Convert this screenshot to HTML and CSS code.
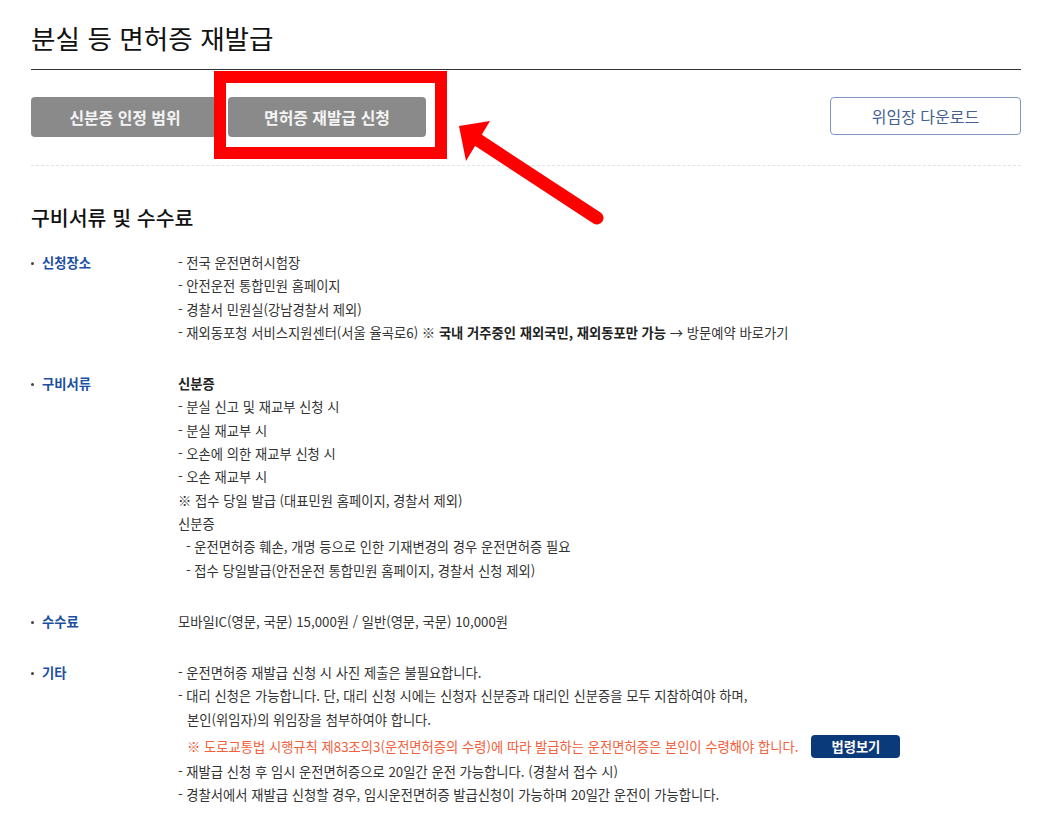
FILE: index.html
```html
<!DOCTYPE html>
<html lang="ko">
<head>
  <meta charset="UTF-8" />
  <title>분실 등 면허증 재발급</title>
  <link rel="stylesheet" href="styles.css">
</head>
<body>
  <div class="page">
    <h1 class="pageTitle">분실 등 면허증 재발급</h1>

    <div class="tabBar">
      <div class="tabs">
        <button class="tab tabFirst">신분증 인정 범위</button>
        <button class="tab tabSecond">면허증 재발급 신청</button>
      </div>
      <button class="downloadBtn">위임장 다운로드</button>
    </div>

    <h2 class="sectionTitle">구비서류 및 수수료</h2>

    <div class="infoList">
      <div class="infoRow">
        <div class="label">신청장소</div>
        <div class="content">
          <p>- 전국 운전면허시험장</p>
          <p>- 안전운전 통합민원 홈페이지</p>
          <p>- 경찰서 민원실(강남경찰서 제외)</p>
          <p>- 재외동포청 서비스지원센터(서울 율곡로6) ※ <b>국내 거주중인 재외국민, 재외동포만 가능</b> → 방문예약 바로가기</p>
        </div>
      </div>

      <div class="infoRow">
        <div class="label">구비서류</div>
        <div class="content">
          <p><b>신분증</b></p>
          <p>- 분실 신고 및 재교부 신청 시</p>
          <p>- 분실 재교부 시</p>
          <p>- 오손에 의한 재교부 신청 시</p>
          <p>- 오손 재교부 시</p>
          <p>※ 접수 당일 발급 (대표민원 홈페이지, 경찰서 제외)</p>
          <p>신분증</p>
          <p class="sub">- 운전면허증 훼손, 개명 등으로 인한 기재변경의 경우 운전면허증 필요</p>
          <p class="sub">- 접수 당일발급(안전운전 통합민원 홈페이지, 경찰서 신청 제외)</p>
        </div>
      </div>

      <div class="infoRow">
        <div class="label">수수료</div>
        <div class="content">
          <p>모바일IC(영문, 국문) 15,000원 / 일반(영문, 국문) 10,000원</p>
        </div>
      </div>

      <div class="infoRow">
        <div class="label">기타</div>
        <div class="content">
          <p>- 운전면허증 재발급 신청 시 사진 제출은 불필요합니다.</p>
          <p>- 대리 신청은 가능합니다. 단, 대리 신청 시에는 신청자 신분증과 대리인 신분증을 모두 지참하여야 하며,</p>
          <p class="cont">본인(위임자)의 위임장을 첨부하여야 합니다.</p>
          <div class="notice">
            <span class="noticeText">※ 도로교통법 시행규칙 제83조의3(운전면허증의 수령)에 따라 발급하는 운전면허증은 본인이 수령해야 합니다.</span>
            <button class="lawBtn">법령보기</button>
          </div>
          <p>- 재발급 신청 후 임시 운전면허증으로 20일간 운전 가능합니다. (경찰서 접수 시)</p>
          <p>- 경찰서에서 재발급 신청할 경우, 임시운전면허증 발급신청이 가능하며 20일간 운전이 가능합니다.</p>
        </div>
      </div>
    </div>
  </div>

  <!-- annotation overlay -->
  <div class="highlightBox"></div>
  <svg class="pointer" width="1048" height="838" viewBox="0 0 1048 838">
    <line x1="597" y1="218" x2="478" y2="140" stroke="#ff0000" stroke-width="13" stroke-linecap="round" />
    <polygon points="459,126 490,121 466,161" fill="#ff0000" />
  </svg>
</body>
</html>
```

FILE: styles.css
```css
* {
  margin: 0;
  padding: 0;
  box-sizing: border-box;
}

body {
  background: #fff;
  font-family: "Noto Sans CJK KR", "Noto Sans", sans-serif;
  color: #333;
  position: relative;
  width: 1048px;
  min-height: 838px;
  overflow: hidden;
}

.page {
  width: 990px;
  margin-left: 31px;
  padding-top: 20px;
}

.pageTitle {
  font-size: 26.6px;
  font-weight: 400;
  line-height: 36px;
  color: #111;
  padding-bottom: 13px;
  border-bottom: 1px solid #333;
}

.tabBar {
  display: flex;
  justify-content: space-between;
  align-items: flex-start;
  margin-top: 27px;
  padding-bottom: 28px;
  border-bottom: 1px dashed #e2e2e2;
}

.tabs {
  display: flex;
  gap: 9px;
}

.tab {
  height: 40px;
  border: none;
  border-radius: 4px;
  background: #8a8a8a;
  color: #f4f4f4;
  font-family: inherit;
  font-size: 15.9px;
  font-weight: 700;
}

.tabFirst {
  width: 188px;
}

.tabSecond {
  width: 198px;
}

.downloadBtn {
  width: 191px;
  height: 38px;
  border: 1px solid #7d97c6;
  border-radius: 4px;
  background: #fff;
  color: #44608f;
  font-family: inherit;
  font-size: 16px;
}

.sectionTitle {
  font-size: 20.5px;
  font-weight: 500;
  line-height: 28px;
  color: #111;
  margin-top: 37px;
}

.infoList {
  margin-top: 20px;
}

.infoRow {
  display: flex;
  margin-bottom: 28px;
  font-size: 13.3px;
  line-height: 23.3px;
}

.label {
  width: 147px;
  flex-shrink: 0;
  position: relative;
  padding-left: 11px;
  color: #1c4f9f;
  font-weight: 700;
}

.label::before {
  content: "";
  position: absolute;
  left: 0;
  top: 11px;
  width: 3px;
  height: 3px;
  border-radius: 50%;
  background: #444;
}

.content b {
  font-weight: 700;
  color: #222;
}

.content .sub {
  padding-left: 8px;
}

.content .cont {
  padding-left: 9px;
}

.notice {
  display: flex;
  align-items: center;
  height: 29px;
  padding-left: 9px;
  padding-top: 2px;
}

.noticeText {
  color: #f2603c;
}

.lawBtn {
  margin-left: 13px;
  width: 89px;
  height: 23px;
  border: none;
  border-radius: 4px;
  background: #0b3a7b;
  color: #fff;
  font-family: inherit;
  font-size: 13.3px;
  font-weight: 700;
}

.highlightBox {
  position: absolute;
  left: 214px;
  top: 71px;
  width: 233px;
  height: 88px;
  border: 12px solid #ff0000;
}

.pointer {
  position: absolute;
  left: 0;
  top: 0;
  pointer-events: none;
}
```
